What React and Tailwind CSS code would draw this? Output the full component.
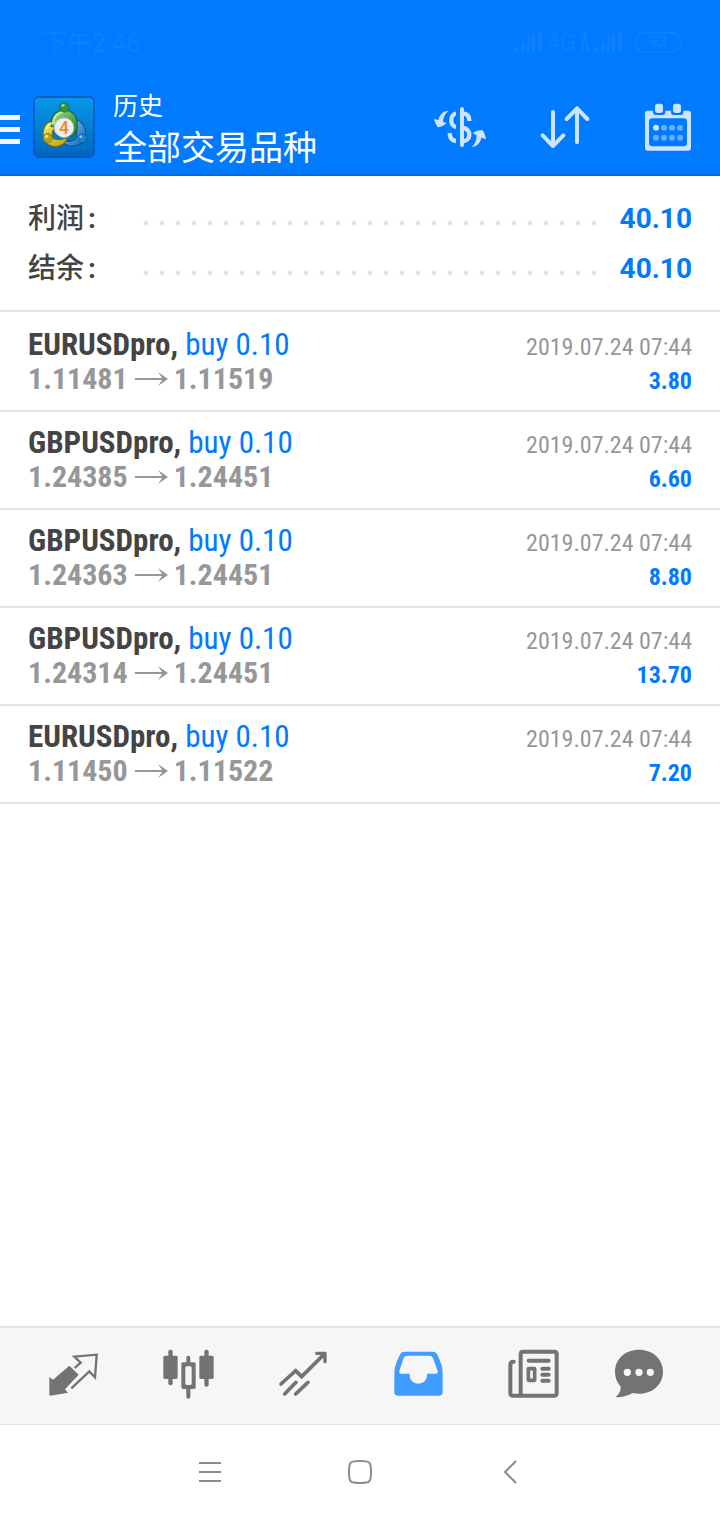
const deals = [
  { id: 1, symbol: 'EURUSDpro', side: 'buy', volume: '0.10', open: '1.11481', close: '1.11519', time: '2019.07.24 07:44', profit: '3.80' },
  { id: 2, symbol: 'GBPUSDpro', side: 'buy', volume: '0.10', open: '1.24385', close: '1.24451', time: '2019.07.24 07:44', profit: '6.60' },
  { id: 3, symbol: 'GBPUSDpro', side: 'buy', volume: '0.10', open: '1.24363', close: '1.24451', time: '2019.07.24 07:44', profit: '8.80' },
  { id: 4, symbol: 'GBPUSDpro', side: 'buy', volume: '0.10', open: '1.24314', close: '1.24451', time: '2019.07.24 07:44', profit: '13.70' },
  { id: 5, symbol: 'EURUSDpro', side: 'buy', volume: '0.10', open: '1.11450', close: '1.11522', time: '2019.07.24 07:44', profit: '7.20' },
];

const totals = [
  { label: '利润', value: '40.10' },
  { label: '结余', value: '40.10' },
];

const Signal = () => (
  <svg width="28" height="20" viewBox="0 0 28 20" fill="currentColor">
    <path d="M0 20v-3l5-3v6zM7 20v-9l4-2v11zM13 20V7l3-2v15zM18 20V4l3-1v17zM24 20V1l4-1v20z" />
  </svg>
);

const StatusBar = () => (
  <div className="flex h-20 items-center justify-between pl-[42px] pr-[38px] pt-1 text-white/6">
    <span className="pt-1 text-[25px] leading-8">下午2:46</span>
    <div className="flex items-center gap-1">
      <Signal />
      <span className="text-2xl">4G</span>
      <svg width="10" height="20" viewBox="0 0 10 20" fill="none" stroke="currentColor" strokeWidth="2">
        <path d="M1 5h8M5 1v8M3 19v-8l-2 3M7 11v8l2-3" />
      </svg>
      <Signal />
      <span className="ml-2 flex h-[21px] w-12 items-center justify-center rounded-full border-2 border-white/5 text-base font-bold">93</span>
    </div>
  </div>
);

const Logo = () => (
  <svg width="62" height="62" viewBox="27 22 184 184" className="shrink-0">
    <defs>
      <linearGradient id="tile" x1="0" y1="0" x2="0" y2="1">
        <stop offset="0" stopColor="#0799ea" />
        <stop offset="1" stopColor="#0064bd" />
      </linearGradient>
      <linearGradient id="green" x1="0" y1="0" x2="1" y2="1">
        <stop offset="0" stopColor="#a6dc8a" />
        <stop offset="1" stopColor="#1f7a2c" />
      </linearGradient>
      <linearGradient id="yellow" x1="0" y1="0" x2="1" y2="1">
        <stop offset="0" stopColor="#f6ee6a" />
        <stop offset="1" stopColor="#b3a00c" />
      </linearGradient>
      <linearGradient id="blue" x1="0" y1="0" x2="1" y2="1">
        <stop offset="0" stopColor="#8fd0f6" />
        <stop offset="1" stopColor="#0b62b4" />
      </linearGradient>
    </defs>
    <rect x="30" y="25" width="178" height="178" rx="14" fill="url(#tile)" stroke="#0757ac" strokeWidth="4" />
    <path d="M60 28v172M90 28v172M120 28v172M150 28v172M180 28v172M33 55h172M33 85h172M33 115h172M33 145h172M33 175h172" stroke="#38aef2" strokeOpacity=".2" strokeWidth="2" />
    <path d="M147 92C171 94 184 112 183 137C182 160 162 172 139 171C123 170 116 160 111 151C128 160 149 158 155 145C162 128 154 112 145 111Z" fill="url(#blue)" stroke="#0a4f95" strokeWidth="3" />
    <path d="M96 95C73 93 58 108 57 132C56 157 72 173 97 172C112 171 125 160 129 147C114 151 97 155 86 147C80 134 87 117 99 113Z" fill="url(#yellow)" stroke="#776b08" strokeWidth="3" />
    <path d="M81 112C78 83 93 64 119 64C147 64 160 84 158 114C157 128 151 138 143 143L130 132C142 116 141 92 120 89C105 90 99 101 98 116Z" fill="url(#green)" stroke="#155f27" strokeWidth="3" />
    <path d="M89 101C89 83 101 71 118 70" fill="none" stroke="#d3f2bc" strokeWidth="4" />
    <path d="M67 120C70 108 80 102 91 101" fill="none" stroke="#ffffa8" strokeWidth="4" />
    <circle cx="120" cy="56" r="14" fill="#329444" stroke="#176129" strokeWidth="2" />
    <circle cx="71" cy="147" r="14" fill="#b1a51c" stroke="#756b0b" strokeWidth="2" />
    <circle cx="173" cy="147" r="13" fill="#2183c9" stroke="#0b559c" strokeWidth="2" />
    <circle cx="116" cy="50" r="5" fill="#8fd389" />
    <circle cx="67" cy="142" r="5" fill="#eee36c" />
    <circle cx="169" cy="143" r="4" fill="#8fd0f6" />
    <circle cx="119" cy="116" r="29" fill="#edeef1" stroke="#b9c2c9" strokeWidth="2" />
    <text x="119" y="134" textAnchor="middle" fontSize="52" fontWeight="500" fill="#f08a24">4</text>
  </svg>
);

const Header = () => (
  <header className="border-b-2 border-[#006ddf] bg-[#007aff] text-white">
    <StatusBar />
    <div className="flex h-[94px] items-center pr-7">
      <button aria-label="菜单" className="mr-[13px] flex flex-col gap-[7px] pt-1">
        <span className="h-[5px] w-5 bg-[#f0f7ff]" />
        <span className="h-[5px] w-5 bg-[#f0f7ff]" />
        <span className="h-[5px] w-5 bg-[#f0f7ff]" />
      </button>
      <Logo />
      <div className="ml-[18px] flex-1 whitespace-nowrap pt-[6px]">
        <p className="text-[25px] leading-9">历史</p>
        <h1 className="text-[34px] font-normal leading-[46px]">全部交易品种</h1>
      </div>
      <div className="flex items-center gap-[54px] text-[#cce4ff]">
        <button aria-label="货币">
          <svg width="52" height="42" viewBox="72 78 156 126" fill="currentColor">
            <path d="M115 93C101 91 88 104 86 120L72 117C74 126 79 136 83 142C92 142 103 136 110 130L99 125C100 112 105 101 115 93Z" />
            <path d="M186 201C200 200 212 188 214 173L228 178C227 168 222 156 217 150C207 150 196 153 188 160L200 166C200 181 195 192 186 201Z" />
            <rect x="150" y="81" width="12" height="120" rx="6" />
            <g fill="none" stroke="currentColor" strokeWidth="13">
              <path d="M138 101C119 103 119 138 138 141" />
              <path d="M119 159C119 174 127 182 138 183" />
              <path d="M160 100C171 101 178 109 178 123" />
              <path d="M160 144C184 147 184 181 160 184" />
            </g>
          </svg>
        </button>
        <button aria-label="排序">
          <svg width="50" height="42" viewBox="387 79 150 126" fill="none" stroke="currentColor" strokeWidth="12" strokeLinecap="round" strokeLinejoin="round">
            <path d="M426 97V199M395 167l31 32 31-32M498 188V86M467 118l31-32 31 32" />
          </svg>
        </button>
        <button aria-label="日期">
          <svg width="48" height="48" viewBox="702 67 144 144" fill="currentColor">
            <path fillRule="evenodd" d="M713 90H729V94Q729 103 738 103H757Q766 103 766 94V90H783V94Q783 103 792 103H811Q820 103 820 94V90H835Q843 90 843 98V202Q843 210 835 210H713Q705 210 705 202V98Q705 90 713 90ZM727 113Q717 113 717 123V187Q717 197 727 197H821Q831 197 831 187V123Q831 113 821 113Z" />
            <rect x="735" y="69" width="24" height="28" rx="8" />
            <rect x="789" y="69" width="24" height="28" rx="8" />
            <circle cx="738" cy="141" r="9" />
            <g fillOpacity=".5">
              <circle cx="762" cy="141" r="9" />
              <circle cx="786" cy="141" r="9" />
              <circle cx="810" cy="141" r="9" />
              <circle cx="738" cy="171" r="9" />
              <circle cx="762" cy="171" r="9" />
              <circle cx="786" cy="171" r="9" />
              <circle cx="810" cy="171" r="9" />
            </g>
          </svg>
        </button>
      </div>
    </div>
  </header>
);

const DealRow = ({ deal }) => (
  <li className="flex h-[98px] items-center justify-between border-b-2 border-[#e3e3e3] px-7 font-['Roboto_Condensed','Liberation_Sans_Narrow',Roboto,sans-serif]">
    <div>
      <p className="text-[31px] leading-[34px] text-[#007aff]">
        <span className="font-bold text-[#444]">{deal.symbol},</span> {deal.side} {deal.volume}
      </p>
      <p className="flex items-center gap-[6px] text-[30px] font-bold leading-[34px] text-[#96979b]">
        {deal.open}
        <svg width="34" height="16" viewBox="0 0 34 16" fill="currentColor">
          <path d="M1 7h27L24 1l10 7-10 7 4-6H1z" />
        </svg>
        {deal.close}
      </p>
    </div>
    <div className="pt-1 text-right text-2xl leading-[34px]">
      <p className="leading-[34px] text-[#96979b]">{deal.time}</p>
      <p className="font-bold leading-[34px] text-[#007aff]">{deal.profit}</p>
    </div>
  </li>
);

const tabs = [
  {
    name: '行情',
    icon: (
      <svg width="52" height="50" viewBox="144 118 156 150" fill="currentColor">
        <path d="M208 168L236 195L195 239L204 249L152 258Q148 258 148 254V202L159 210Z" />
        <path d="M224 175L242 159L223 141L290 135L285 203L268 185L214 236" fill="none" stroke="currentColor" strokeWidth="7" />
      </svg>
    ),
  },
  {
    name: '图表',
    icon: (
      <svg width="52" height="50" viewBox="489 118 156 150" fill="currentColor">
        <rect x="490" y="138" width="43" height="70" rx="5" />
        <rect x="505" y="120" width="13" height="107" rx="6" />
        <rect x="598" y="138" width="43" height="70" rx="5" />
        <rect x="613" y="120" width="13" height="111" rx="6" />
        <path fillRule="evenodd" d="M559 158V145Q559 138 565 138T571 145V158H582Q587 158 587 163V233Q587 238 582 238H571V261Q571 267 565 267T559 261V238H549Q544 238 544 233V163Q544 158 549 158ZM560 170Q556 170 556 175V221Q556 226 560 226H571Q575 226 575 221V175Q575 170 571 170Z" />
      </svg>
    ),
  },
  {
    name: '交易',
    icon: (
      <svg width="52" height="50" viewBox="834 118 156 150" fill="none" stroke="currentColor" strokeWidth="11" strokeLinecap="round">
        <path d="M843 223L887 183L905 201L972 134M854 253L888 218M887 253L924 218" />
        <path d="M950 126H976Q980 126 980 130V156Q980 161 975 161T970 156V146L960 136H950Q945 136 945 131T950 126Z" fill="currentColor" stroke="none" />
      </svg>
    ),
  },
  {
    name: '历史',
    active: true,
    icon: (
      <svg width="52" height="50" viewBox="99 118 156 150" fill="currentColor">
        <path fillRule="evenodd" d="M134 126H218Q228 126 232 135C240 152 248 169 248 188V248Q248 258 238 258H114Q103 258 103 248V188C104 168 112 151 120 135Q124 126 134 126ZM142 138Q134 138 131 145L118 184Q116 192 124 192H149V198C151 229 199 229 201 198V192H227Q235 192 233 184L219 145Q216 138 208 138Z" />
      </svg>
    ),
  },
  {
    name: '新闻',
    icon: (
      <svg width="52" height="50" viewBox="444 118 156 150" fill="none" stroke="currentColor" strokeWidth="12" strokeLinecap="round">
        <path d="M482 258V133Q482 126 489 126H583Q590 126 590 133V251Q590 258 583 258H458Q451 258 451 251V166Q451 156 461 156" />
        <path d="M506 153H566M547 177H566M547 195H566M547 213H566" />
        <rect x="505" y="177" width="19" height="35" rx="1" strokeWidth="11" />
      </svg>
    ),
  },
  {
    name: '消息',
    icon: (
      <svg width="70" height="50" viewBox="762 118 210 150" fill="currentColor">
        <path fillRule="evenodd" d="M837 120C878 120 909 148 909 186S878 252 837 252Q828 252 818 250C804 258 785 264 766 263C776 255 785 241 781 229C770 217 765 203 765 186C765 148 796 120 837 120ZM802 177a11 11 0 1 0 0 22a11 11 0 1 0 0-22ZM837 177a11 11 0 1 0 0 22a11 11 0 1 0 0-22ZM871 177a11 11 0 1 0 0 22a11 11 0 1 0 0-22Z" />
      </svg>
    ),
  },
];

const TabBar = () => (
  <nav className="grid h-[98px] grid-cols-6 border-t-2 border-[#e3e3e3] bg-[#f6f6f6] pb-1 pl-4 pr-[14px]">
    {tabs.map((tab) => (
      <button
        key={tab.name}
        aria-label={tab.name}
        className={tab.active ? 'flex items-center justify-center text-[#419cff]' : 'flex items-center justify-center text-[#737373]'}
      >
        {tab.icon}
      </button>
    ))}
  </nav>
);

const SystemNav = () => (
  <div className="flex h-24 items-center justify-center border-t border-[#e3e3e3] pb-[2px] text-[#8c8c8c]">
    <button aria-label="最近任务" className="flex w-[150px] justify-center">
      <svg width="22" height="22" viewBox="0 0 22 22" stroke="currentColor" strokeWidth="2">
        <path d="M0 2h22M0 11h22M0 20h22" />
      </svg>
    </button>
    <button aria-label="主屏幕" className="flex w-[150px] justify-center">
      <svg width="24" height="24" viewBox="0 0 24 24" fill="none" stroke="currentColor" strokeWidth="2">
        <path d="M1 12C1 2 2 1 12 1S23 2 23 12 22 23 12 23 1 22 1 12Z" />
      </svg>
    </button>
    <button aria-label="返回" className="flex w-[150px] justify-center">
      <svg width="14" height="24" viewBox="0 0 14 24" fill="none" stroke="currentColor" strokeWidth="2">
        <path d="M13 1L2 12l11 11" />
      </svg>
    </button>
  </div>
);

const App = () => (
  <div className="flex min-h-screen flex-col bg-white font-[Roboto,'Noto_Sans_CJK_SC',sans-serif]">
    <Header />
    <main className="flex-1">
      <dl className="border-b-2 border-[#e3e3e3] px-7 pb-4 pt-[18px]">
        {totals.map((item) => (
          <div key={item.label} className="flex h-[50px] items-center text-[28px] leading-[50px]">
            <dt className="w-[110px] font-medium text-[#444]">
              {item.label}
              <span className="ml-1 font-bold">:</span>
            </dt>
            <dd className="flex flex-1 items-center font-bold text-[#007aff]">
              <span className="mt-2 h-4 flex-1 bg-[radial-gradient(circle,#e3e3e3_2px,transparent_3px)] bg-[length:16px_16px]" />
              <span className="ml-[18px]">{item.value}</span>
            </dd>
          </div>
        ))}
      </dl>
      <ul className="pt-[2px]">
        {deals.map((deal) => (
          <DealRow key={deal.id} deal={deal} />
        ))}
      </ul>
    </main>
    <TabBar />
    <SystemNav />
  </div>
);

export default App;
